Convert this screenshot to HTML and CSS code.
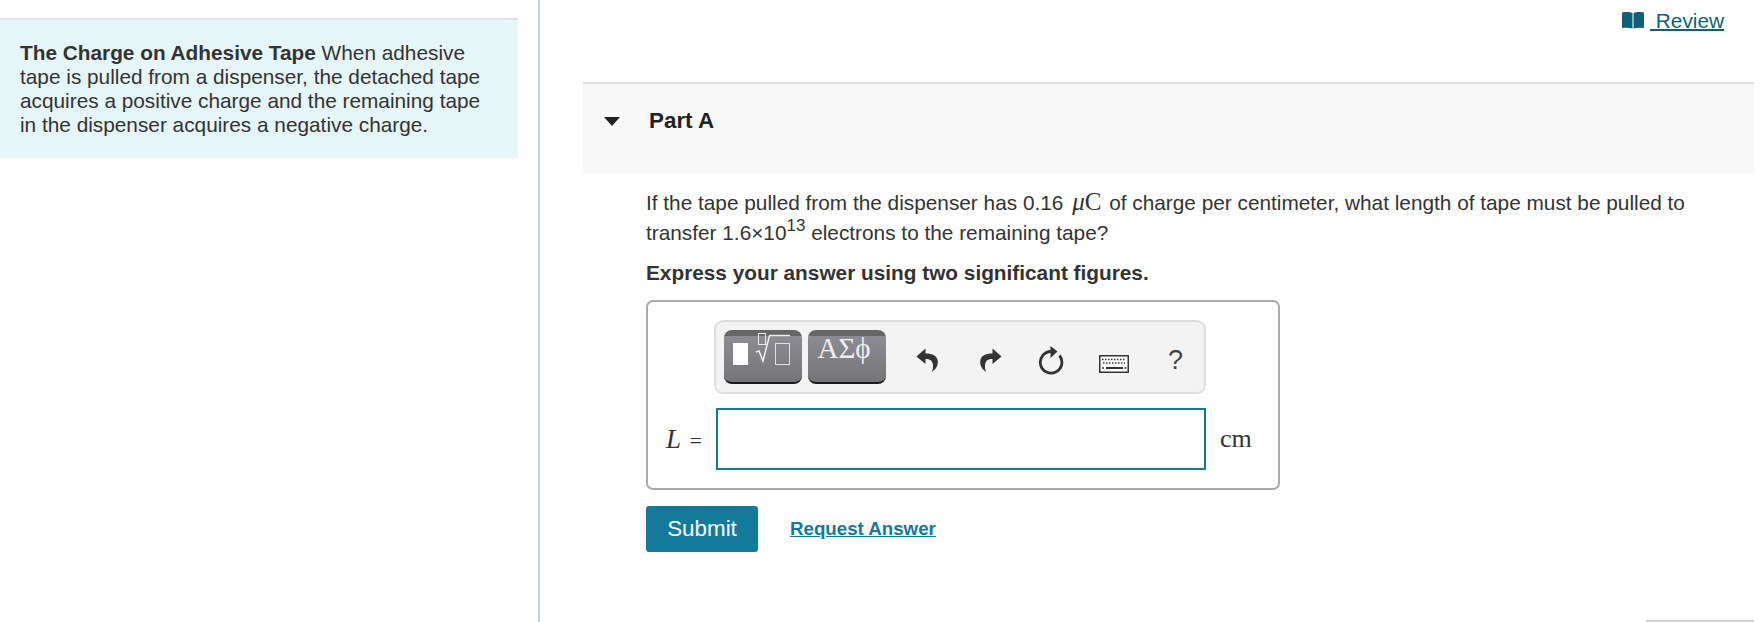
FILE: index.html
```html
<!DOCTYPE html>
<html lang="en">
<head>
<meta charset="utf-8">
<title>The Charge on Adhesive Tape</title>
<link rel="stylesheet" href="styles.css">
</head>
<body>
<div class="page">
  <aside class="left">
    <div class="intro"><strong>The Charge on Adhesive Tape</strong> When adhesive tape is pulled from a dispenser, the detached tape acquires a positive charge and the remaining tape in the dispenser acquires a negative charge.</div>
  </aside>
  <main class="right">
    <div class="review-row">
      <a class="review" href="#">
        <svg class="book" viewBox="0 0 22 17" width="22" height="17"><path d="M0 0.500C3 -0.300 7 -0.300 10.500 1V16.500C7 15.500 3 15.500 0 16Z M11.500 1C15 -0.300 19 -0.300 22 0.500V16C19 15.500 15 15.500 11.500 16.500Z" fill="#0e5f78"/></svg><span class="review-text">&nbsp;Review</span>
      </a>
    </div>
    <section class="part-head">
      <svg class="caret" viewBox="0 0 16 9" width="16" height="9"><path d="M0 0H16L8 9Z" fill="#222"/></svg>
      <h2 class="part-title">Part A</h2>
    </section>
    <section class="part-body">
      <p class="q">If the tape pulled from the dispenser has 0.16 <span class="math"><i>μ</i>C</span> of charge per centimeter, what length of tape must be pulled to transfer 1.6×10<sup>13</sup> electrons to the remaining tape?</p>
      <p class="instr">Express your answer using two significant figures.</p>
      <div class="answer-box">
        <div class="toolbar">
          <button class="tb-btn" type="button" aria-label="Templates">
            <svg viewBox="0 0 78 54" width="78" height="54"><rect x="9" y="13" width="15" height="22" fill="#fff"/><rect x="34.500" y="3.500" width="7" height="11" fill="none" stroke="#e8e8e8"/><path d="M32 22L35 21L39 31L45.500 5.500H66" fill="none" stroke="#eee" stroke-width="1.500"/><rect x="51.500" y="13.500" width="14" height="21" fill="none" stroke="#e0e0e0"/></svg>
          </button>
          <button class="tb-btn tb-sym" type="button">ΑΣϕ</button>
          <svg class="ic ic-undo" viewBox="0 0 22 24" width="22" height="24"><path d="M9.500 0.500L0.500 8.500L9.500 16V11C14 11 16.500 12.500 17 17C17.200 19.500 17 22 15.500 24C20 21.500 22 17.500 21.800 13.500C21.500 8 17 5.500 9.500 5.500Z" fill="#333"/></svg>
          <svg class="ic ic-redo" viewBox="0 0 22 24" width="22" height="24"><path d="M12.500 0.500L21.500 8.500L12.500 16V11C8 11 5.500 12.500 5 17C4.800 19.500 5 22 6.500 24C2 21.500 0 17.500 0.200 13.500C0.500 8 5 5.500 12.500 5.500Z" fill="#333"/></svg>
          <svg class="ic ic-reset" viewBox="0 0 26 30" width="26" height="30"><path d="M13 5.500A10.800 10.800 0 1 0 21.500 9.500" fill="none" stroke="#333" stroke-width="2.800"/><path d="M12.500 0L19.500 5.500L12.500 12Z" fill="#333"/></svg>
          <svg class="ic ic-kbd" viewBox="0 0 30 18" width="30" height="18"><rect x="0.750" y="0.750" width="28.500" height="16.500" fill="#fff" stroke="#333" stroke-width="1.500"/><path d="M3 4.500h24M4 8h22" stroke="#333" stroke-width="1.500" stroke-dasharray="1.500 1.500"/><path d="M7 13h17" stroke="#333" stroke-width="2"/><path d="M3 13h2M25.500 13h2" stroke="#333" stroke-width="1.500"/></svg>
          <span class="help">?</span>
        </div>
        <div class="input-row">
          <label class="lbl"><i>L</i> =</label>
          <div class="input"></div>
          <span class="unit">cm</span>
        </div>
      </div>
      <div class="actions">
        <button class="submit" type="button">Submit</button>
        <a class="req" href="#">Request Answer</a>
      </div>
    </section>
    <div class="next-edge"></div>
  </main>
</div>
</body>
</html>
```
FILE: styles.css
```css
* { box-sizing: border-box; }
html, body { margin: 0; padding: 0; background: #fff; }
body { font-family: "Liberation Sans", Arial, sans-serif; color: #333; overflow: hidden; }
.page { display: flex; width: 1762px; height: 622px; overflow: hidden; }

.left { width: 540px; flex: none; padding: 18px 20px 0 0; border-right: 2px solid #c3d2e3; }
.intro { height: 140px; background: #e6f6f8; border-top: 2px solid #dde3e8; padding: 21px 30px 0 20px; font-size: 20.8px; line-height: 24px; color: #333; }
.intro strong { font-weight: 700; }

.right { flex: 1; min-width: 0; padding: 0 8px 0 43px; display: flex; flex-direction: column; }
.review-row { height: 82px; display: flex; justify-content: flex-end; padding: 11px 30px 0 0; flex: none; }
.review { display: flex; align-items: flex-start; height: 20px; color: #0e5f78; font-size: 20.8px; line-height: 20px; text-decoration: none; }
.book { display: block; flex: none; margin-top: 1px; }
.review-text { margin-left: 6px; text-decoration: underline; text-decoration-thickness: 2px; }

.part-head { flex: none; height: 92px; background: #f8f8f8; border-top: 2px solid #dedede; display: flex; align-items: flex-start; padding: 30px 0 0 21px; }
.caret { margin-top: 3px; flex: none; }
.part-title { margin: -5px 0 0 29px; font-size: 22.4px; line-height: 24px; font-weight: 700; color: #222; }

.part-body { flex: none; padding: 14px 0 0 63px; }
.q { margin: 0; width: 1060px; font-size: 20.8px; line-height: 30px; color: #333; }
.q sup { font-size: 17px; line-height: 0; vertical-align: 9px; }
.math { font-family: "Liberation Serif", serif; font-size: 25px; line-height: 0; margin: 0 2px 0 3px; }
.instr { margin: 13px 0 0; font-size: 20.8px; line-height: 24px; font-weight: 700; color: #333; }

.answer-box { margin-top: 15px; width: 634px; height: 190px; border: 2px solid #aaa; border-radius: 7px; padding: 18px 72px 0 66px; }
.toolbar { width: 492px; height: 74px; border: 2px solid #ddd; border-radius: 9px; background: #f3f3f3; display: flex; align-items: flex-start; padding: 8px 0 0 8px; position: relative; }
.tb-btn { width: 78px; height: 54px; padding: 0; margin: 0 6px 0 0; border: 0; border-bottom: 2px solid #1c1c1c; border-radius: 8px; background: linear-gradient(#666 0 6px, #8c8c92 6px, #757579); display: block; overflow: hidden; }
.tb-btn svg { display: block; }
.tb-sym { font-family: "Liberation Serif", serif; font-size: 29px; line-height: 28px; color: #eee; padding: 3px 6px 20px 0; }
.ic { display: block; flex: none; }
.ic-undo { margin: 18px 0 0 24px; }
.ic-redo { margin: 18px 0 0 42px; }
.ic-reset { margin: 16px 0 0 36px; }
.ic-kbd { margin: 25px 0 0 35px; }
.help { margin: 14px 0 0 39px; font-size: 27px; line-height: 32px; color: #444; }

.input-row { display: flex; align-items: center; margin: 14px 0 0 -67px; width: 640px; }
.lbl { width: 69px; padding-left: 19px; font-family: "Liberation Serif", serif; font-size: 22px; word-spacing: 3px; color: #333; flex: none; }
.lbl i { font-size: 27px; }
.input { width: 490px; height: 62px; border: 2px solid #137a9c; background: #fff; flex: none; }
.unit { margin-left: 14px; font-family: "Liberation Serif", serif; font-size: 26px; color: #333; }

.actions { display: flex; align-items: center; margin-top: 16px; }
.submit { width: 112px; height: 46px; border: 0; border-radius: 3px; background: #137a9c; color: #fff; font-family: "Liberation Sans", Arial, sans-serif; font-size: 22.4px; padding: 0; }
.req { margin: -1px 0 0 32px; font-size: 18.72px; font-weight: 700; color: #137a9c; text-decoration: underline; }

.next-edge { margin: auto 0 0 auto; width: 108px; height: 2px; background: #d2d2d2; flex: none; }
```
